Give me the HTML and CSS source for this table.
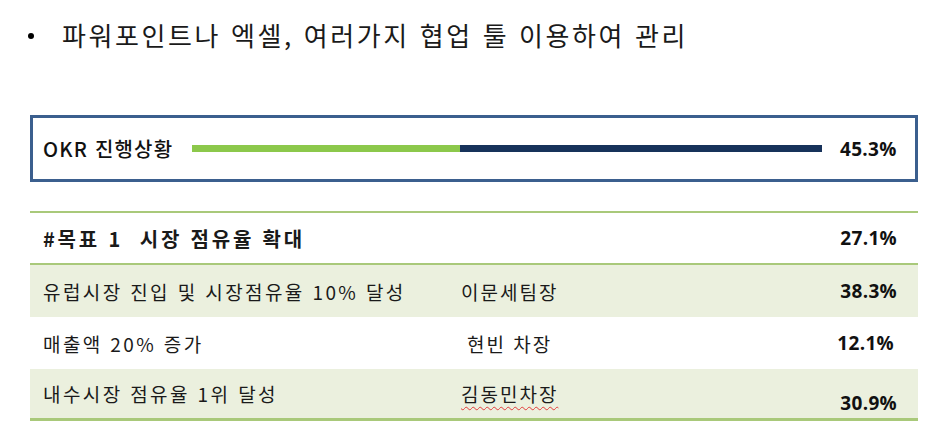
FILE: index.html
```html
<!DOCTYPE html>
<html lang="ko">
<head>
<meta charset="utf-8">
<link rel="stylesheet" href="styles.css">
</head>
<body>
<ul class="bullets">
  <li>파워포인트나 엑셀, 여러가지 협업 툴 이용하여 관리</li>
</ul>
<section class="okr">
  <span class="okr-label">OKR 진행상황</span>
  <div class="bar"><div class="bar-done" style="width:42.5%"></div></div>
  <span class="pct">45.3%</span>
</section>
<section class="table">
  <div class="row head">
    <span class="goal">#목표 1&nbsp; 시장 점유율 확대</span>
    <span class="owner"></span>
    <span class="pct">27.1%</span>
  </div>
  <div class="row shade">
    <span class="goal">유럽시장 진입 및 시장점유율 10% 달성</span>
    <span class="owner">이문세팀장</span>
    <span class="pct">38.3%</span>
  </div>
  <div class="row">
    <span class="goal">매출액 20% 증가</span>
    <span class="owner indent">현빈 차장</span>
    <span class="pct nudge-left">12.1%</span>
  </div>
  <div class="row shade last">
    <span class="goal">내수시장 점유율 1위 달성</span>
    <span class="owner"><span class="spell">김동민차장</span></span>
    <span class="pct low">30.9%</span>
  </div>
</section>
</body>
</html>
```
FILE: styles.css
```css
html, body {
  margin: 0;
  padding: 0;
  background: #ffffff;
  color: #111111;
  font-family: "Noto Sans CJK KR", "Noto Sans", sans-serif;
}
.bullets {
  margin: 0;
  padding: 13px 0 0 62px;
  list-style: none;
  height: 100px;
  box-sizing: border-box;
}
.bullets li {
  position: relative;
  font-size: 26px;
  line-height: 44px;
  letter-spacing: 2.6px;
  color: #1a1a1a;
}
.bullets li::before {
  content: "";
  position: absolute;
  left: -34px;
  top: 20px;
  width: 6px;
  height: 6px;
  border-radius: 50%;
  background: #000;
}
.okr {
  margin: 15px 0 0 30px;
  width: 888px;
  height: 67px;
  box-sizing: border-box;
  border: 3px solid #3b5f8e;
  display: flex;
  align-items: center;
  padding: 0 0 0 10px;
}
.okr-label {
  font-size: 20px;
  font-weight: 500;
  width: 149px;
  letter-spacing: 1.2px;
  white-space: nowrap;
}
.bar {
  width: 630px;
  height: 7px;
  background: #17325a;
  display: flex;
}
.bar-done {
  height: 100%;
  background: #8cc84b;
}
.pct {
  font-family: "Open Sans", "Liberation Sans", sans-serif;
  font-weight: 700;
  font-size: 19px;
  letter-spacing: 0.3px;
}
.okr .pct {
  margin-left: 18px;
}
.table {
  margin: 29px 0 0 30px;
  width: 888px;
  border-top: 2px solid #a9c97a;
}
.row {
  display: flex;
  align-items: center;
  height: 52px;
  padding: 0 21px 0 13px;
  box-sizing: border-box;
}
.row.head {
  border-bottom: 2px solid #a9c97a;
  height: 52px;
}
.row.shade {
  background: #ebf0de;
}
.row.last {
  border-bottom: 3px solid #a9c97a;
}
.goal {
  width: 418px;
  font-size: 19px;
  letter-spacing: 2.4px;
  color: #1a1a1a;
  white-space: nowrap;
}
.head .goal {
  font-weight: 700;
  font-size: 20px;
  letter-spacing: 2.8px;
}
.owner {
  flex: 1;
  font-size: 19px;
  color: #1a1a1a;
  letter-spacing: 2px;
  white-space: nowrap;
}
.owner.indent {
  padding-left: 6px;
}
.spell {
  text-decoration: underline wavy #e23b3b;
  text-decoration-thickness: 1px;
  text-underline-offset: 4px;
}
.row .pct {
  text-align: right;
}
.pct.nudge-left {
  margin-right: 3px;
}
.pct.low {
  margin-top: 18px;
}
```
